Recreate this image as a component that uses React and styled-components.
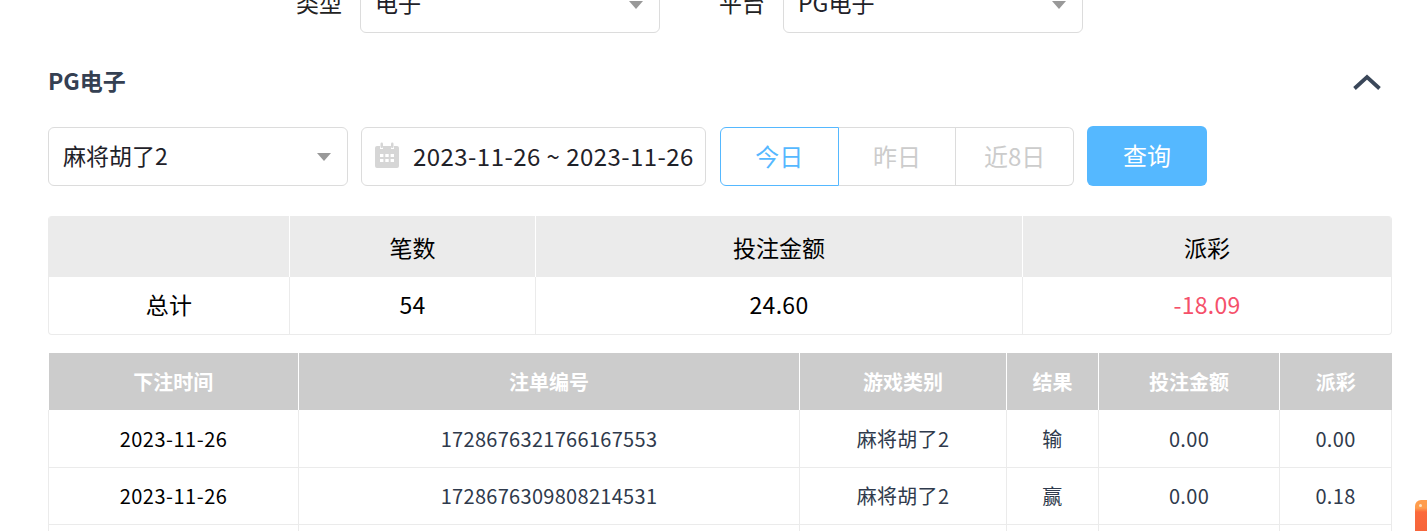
import React from "react";
import styled, { createGlobalStyle } from "styled-components";

const GlobalStyle = createGlobalStyle`
  html, body {
    margin: 0;
    padding: 0;
    height: 531px;
    overflow: hidden;
    background: #fff;
    font-family: "Noto Sans CJK SC", "Noto Sans", sans-serif;
    color: #000;
  }
`;

const Page = styled.main`
  position: relative;
  width: 1427px;
  height: 531px;
  overflow: hidden;
  padding: 0 35px 0 48px;
  box-sizing: border-box;
`;

const FilterRow = styled.section`
  display: flex;
  align-items: center;
  height: 59px;
  margin-top: -26px;
  padding-left: 230px;
`;

const FilterLabel = styled.label`
  width: 64px;
  margin-right: 18px;
  padding-bottom: 3px;
  text-align: right;
  font-size: 23px;
  color: #222;
`;

const Select = styled.div`
  display: flex;
  align-items: center;
  justify-content: space-between;
  width: 300px;
  height: 59px;
  box-sizing: border-box;
  padding: 0 16px 3px 14px;
  border: 1px solid #dcdcdc;
  border-radius: 6px;
  font-size: 23px;
  color: #1f2229;
  background: #fff;
`;

const Caret = styled.i`
  width: 0;
  height: 0;
  margin-top: 5px;
  border-left: 7px solid transparent;
  border-right: 7px solid transparent;
  border-top: 8px solid #999;
`;

const FilterGap = styled.div`
  width: 41px;
`;

const SectionHeader = styled.header`
  display: flex;
  align-items: center;
  justify-content: space-between;
  margin-top: 26px;
  height: 46px;
  padding-right: 11px;
`;

const SectionTitle = styled.h2`
  margin: 0 0 4px;
  font-size: 23px;
  font-weight: 700;
  color: #354052;
`;

const Controls = styled.div`
  display: flex;
  align-items: center;
  gap: 13px;
  margin-top: 21px;
  height: 60px;
`;

const DateBox = styled.div`
  display: flex;
  align-items: center;
  width: 345px;
  height: 59px;
  box-sizing: border-box;
  padding: 0 0 2px 12px;
  border: 1px solid #dcdcdc;
  border-radius: 6px;
  font-size: 24px;
  letter-spacing: 0.45px;
  color: #1f2229;
  white-space: nowrap;
  gap: 13px;
`;

const Segments = styled.div`
  display: flex;
  width: 354px;
  height: 59px;
  margin-left: 1px;
`;

const Segment = styled.div`
  flex: 1;
  display: flex;
  align-items: center;
  justify-content: center;
  box-sizing: border-box;
  padding-bottom: 2px;
  font-size: 24px;
  border: 1px solid ${(p) => (p.$active ? "#55b8ff" : "#dcdcdc")};
  border-left-width: ${(p) => (p.$active ? "1px" : "0")};
  color: ${(p) => (p.$active ? "#55b8ff" : "#cccccc")};
  border-radius: ${(p) =>
    p.$active ? "6px 0 0 6px" : p.$last ? "0 6px 6px 0" : "0"};
`;

const QueryButton = styled.button`
  width: 120px;
  height: 60px;
  padding: 0 0 3px;
  border: 0;
  border-radius: 6px;
  background: #55b8ff;
  color: #fff;
  font-family: inherit;
  font-size: 24px;
`;

const SummaryTable = styled.table`
  width: 1344px;
  margin-top: 30px;
  table-layout: fixed;
  border-collapse: separate;
  border-spacing: 0;
  border: 1px solid #ebebeb;
  border-top: 0;
  border-radius: 4px;
  overflow: hidden;

  th {
    height: 61px;
    padding: 0;
    background: #ebebeb;
    font-size: 23px;
    font-weight: 400;
    border-left: 1px solid #fff;
  }
  th:first-child {
    border-left: 0;
  }
  td {
    height: 54px;
    padding: 0 0 3px;
    text-align: center;
    font-size: 23px;
    letter-spacing: 0.3px;
    border-left: 1px solid #ebebeb;
  }
  td:first-child {
    border-left: 0;
  }
`;

const Negative = styled.td`
  color: #f5506a;
`;

const DetailTable = styled.table`
  width: 1344px;
  margin-top: 18px;
  table-layout: fixed;
  border-collapse: collapse;

  th {
    height: 57px;
    padding: 0;
    background: #cccccc;
    color: #fff;
    font-size: 20px;
    font-weight: 700;
    border-left: 1px solid #fff;
  }
  th:first-child {
    border-left: 0;
  }
  td {
    height: 54px;
    padding: 0 0 2px;
    text-align: center;
    font-size: 20px;
    letter-spacing: 0.3px;
    color: #2f3a4c;
    border: 1px solid #ebebeb;
    border-top: 0;
  }
  tbody tr:first-child td {
    height: 55px;
    padding: 1px 0;
  }
`;

const DateCell = styled.td`
  && {
    color: #000;
    letter-spacing: 0.5px;
  }
`;

const Column = styled.col`
  width: ${(p) => p.$w}px;
`;

const FloatBadge = styled.div`
  position: absolute;
  left: 1415px;
  top: 500px;
  width: 24px;
  height: 40px;
  border-radius: 6px;
  background: linear-gradient(#ff9d4d 0, #ff9d4d 8px, #fb6a3c 12px, #f4623a 100%);
`;

const BadgeDot = styled.span`
  position: absolute;
  left: 4px;
  top: 4px;
  width: 3px;
  height: 3px;
  border-radius: 50%;
  background: #ffe3c4;
`;

const detailRows = [
  ["2023-11-26", "1728676321766167553", "麻将胡了2", "输", "0.00", "0.00"],
  ["2023-11-26", "1728676309808214531", "麻将胡了2", "赢", "0.00", "0.18"],
  ["", "", "", "", "", ""],
];

const CalendarIcon = () => (
  <svg width="26" height="26" viewBox="0 0 26 26">
    <path
      fill="#d6d6d6"
      d="M3 4h3v3h3V4h8v3h3V4h3a2 2 0 0 1 2 2v18a2 2 0 0 1-2 2H3a2 2 0 0 1-2-2V6a2 2 0 0 1 2-2z"
    />
    <rect x="6.5" y="0.5" width="2.5" height="5.5" rx="1.2" fill="#d6d6d6" />
    <rect x="17" y="0.5" width="2.5" height="5.5" rx="1.2" fill="#d6d6d6" />
    <g fill="#fff">
      <rect x="6" y="12" width="3.4" height="3" />
      <rect x="11.3" y="12" width="3.4" height="3" />
      <rect x="16.6" y="12" width="3.4" height="3" />
      <rect x="6" y="17" width="3.4" height="3" />
      <rect x="11.3" y="17" width="3.4" height="3" />
      <rect x="16.6" y="17" width="3.4" height="3" />
    </g>
  </svg>
);

const ChevronUp = () => (
  <svg width="28" height="16" viewBox="0 0 28 16">
    <path d="M1.5 14.5 14 3l12.5 11.5" fill="none" stroke="#3a4759" strokeWidth="3.8" />
  </svg>
);

const App = () => {
  return (
    <>
      <GlobalStyle />
      <Page>
        <FilterRow>
          <FilterLabel>类型</FilterLabel>
          <Select>
            电子
            <Caret />
          </Select>
          <FilterGap />
          <FilterLabel>平台</FilterLabel>
          <Select>
            PG电子
            <Caret />
          </Select>
        </FilterRow>

        <SectionHeader>
          <SectionTitle>PG电子</SectionTitle>
          <ChevronUp />
        </SectionHeader>

        <Controls>
          <Select>
            麻将胡了2
            <Caret />
          </Select>
          <DateBox>
            <CalendarIcon />
            2023-11-26 ~ 2023-11-26
          </DateBox>
          <Segments>
            <Segment $active>今日</Segment>
            <Segment>昨日</Segment>
            <Segment $last>近8日</Segment>
          </Segments>
          <QueryButton>查询</QueryButton>
        </Controls>

        <SummaryTable>
          <colgroup>
            <Column $w={240} />
            <Column $w={246} />
            <Column $w={487} />
            <Column $w={369} />
          </colgroup>
          <thead>
            <tr>
              <th></th>
              <th>笔数</th>
              <th>投注金额</th>
              <th>派彩</th>
            </tr>
          </thead>
          <tbody>
            <tr>
              <td>总计</td>
              <td>54</td>
              <td>24.60</td>
              <Negative>-18.09</Negative>
            </tr>
          </tbody>
        </SummaryTable>

        <DetailTable>
          <colgroup>
            <Column $w={250} />
            <Column $w={501} />
            <Column $w={207} />
            <Column $w={92} />
            <Column $w={181} />
            <Column $w={112} />
          </colgroup>
          <thead>
            <tr>
              <th>下注时间</th>
              <th>注单编号</th>
              <th>游戏类别</th>
              <th>结果</th>
              <th>投注金额</th>
              <th>派彩</th>
            </tr>
          </thead>
          <tbody>
            {detailRows.map((row, i) => (
              <tr key={i}>
                <DateCell>{row[0]}</DateCell>
                {row.slice(1).map((cell, j) => (
                  <td key={j}>{cell}</td>
                ))}
              </tr>
            ))}
          </tbody>
        </DetailTable>

        <FloatBadge>
          <BadgeDot />
        </FloatBadge>
      </Page>
    </>
  );
};

export default App;
